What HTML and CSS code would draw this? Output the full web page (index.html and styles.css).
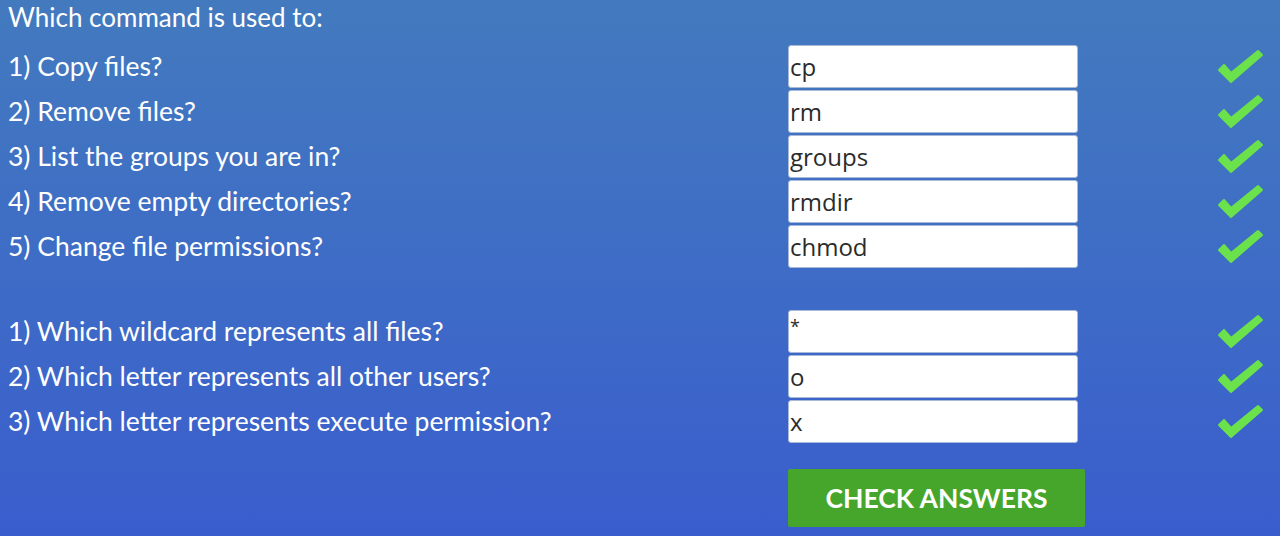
FILE: index.html
```html
<!DOCTYPE html>
<html>
<head>
<meta charset="utf-8">
<link rel="stylesheet" href="styles.css">
</head>
<body>
<div class="page">
  <div class="title">Which command is used to:</div>
  <div class="group">
    <div class="row"><span class="label">1) Copy files?</span><input class="answer" value="cp"><span class="check"><svg viewBox="0 0 48 36" width="48" height="36"><path d="M3 21 L8 16 L15 24 L42 2 L46 6 L15 33 Z" /></svg></span></div>
    <div class="row"><span class="label">2) Remove files?</span><input class="answer" value="rm"><span class="check"><svg viewBox="0 0 48 36" width="48" height="36"><path d="M3 21 L8 16 L15 24 L42 2 L46 6 L15 33 Z" /></svg></span></div>
    <div class="row"><span class="label">3) List the groups you are in?</span><input class="answer" value="groups"><span class="check"><svg viewBox="0 0 48 36" width="48" height="36"><path d="M3 21 L8 16 L15 24 L42 2 L46 6 L15 33 Z" /></svg></span></div>
    <div class="row"><span class="label">4) Remove empty directories?</span><input class="answer" value="rmdir"><span class="check"><svg viewBox="0 0 48 36" width="48" height="36"><path d="M3 21 L8 16 L15 24 L42 2 L46 6 L15 33 Z" /></svg></span></div>
    <div class="row"><span class="label">5) Change file permissions?</span><input class="answer" value="chmod"><span class="check"><svg viewBox="0 0 48 36" width="48" height="36"><path d="M3 21 L8 16 L15 24 L42 2 L46 6 L15 33 Z" /></svg></span></div>
  </div>
  <div class="group second">
    <div class="row"><span class="label">1) Which wildcard represents all files?</span><input class="answer small" value="*"><span class="check"><svg viewBox="0 0 48 36" width="48" height="36"><path d="M3 21 L8 16 L15 24 L42 2 L46 6 L15 33 Z" /></svg></span></div>
    <div class="row"><span class="label">2) Which letter represents all other users?</span><input class="answer" value="o"><span class="check"><svg viewBox="0 0 48 36" width="48" height="36"><path d="M3 21 L8 16 L15 24 L42 2 L46 6 L15 33 Z" /></svg></span></div>
    <div class="row"><span class="label">3) Which letter represents execute permission?</span><input class="answer" value="x"><span class="check"><svg viewBox="0 0 48 36" width="48" height="36"><path d="M3 21 L8 16 L15 24 L42 2 L46 6 L15 33 Z" /></svg></span></div>
  </div>
  <div class="actions">
    <button class="btn">CHECK ANSWERS</button>
  </div>
</div>
</body>
</html>
```

FILE: styles.css
```css
html, body {
  margin: 0;
  padding: 0;
}
body {
  width: 1280px;
  height: 536px;
  overflow: hidden;
  background: linear-gradient(to bottom, #437abe 0%, #3e6cc6 50%, #3a5dcd 100%);
  font-family: "Lato", "Liberation Sans", sans-serif;
  color: #fff;
}
.page {
  padding: 0 0 0 8px;
  display: flex;
  flex-direction: column;
}
.title {
  font-size: 26px;
  height: 45px;
  line-height: 34px;
}
.group {
  display: flex;
  flex-direction: column;
  gap: 2px;
}
.second {
  margin-top: 42px;
}
.row {
  display: flex;
  align-items: center;
  height: 43px;
}
.label {
  width: 780px;
  font-size: 26.5px;
  line-height: 45px;
}
.answer {
  box-sizing: border-box;
  width: 290px;
  height: 43px;
  margin: 0;
  padding: 0 0 0 1px;
  border: 1px solid #a9b9d8;
  border-radius: 3px;
  background: #fff;
  font-family: "Open Sans", "Noto Sans", sans-serif;
  font-size: 24px;
  color: #2b2b2b;
  outline: none;
}
.answer.small {
  font-size: 18px;
  padding-bottom: 12px;
}
.check {
  margin-left: 138px;
  width: 48px;
  height: 36px;
  display: flex;
}
.check path {
  fill: #6be24b;
  stroke: #6be24b;
  stroke-width: 2;
  stroke-linejoin: round;
}
.actions {
  padding-left: 780px;
  margin-top: 26px;
}
.btn {
  width: 297px;
  height: 58px;
  border: none;
  border-radius: 2px;
  background: #46a62b;
  color: #fff;
  font-family: "Lato", "Liberation Sans", sans-serif;
  font-weight: 700;
  font-size: 26.5px;
  padding: 0;
}
```
